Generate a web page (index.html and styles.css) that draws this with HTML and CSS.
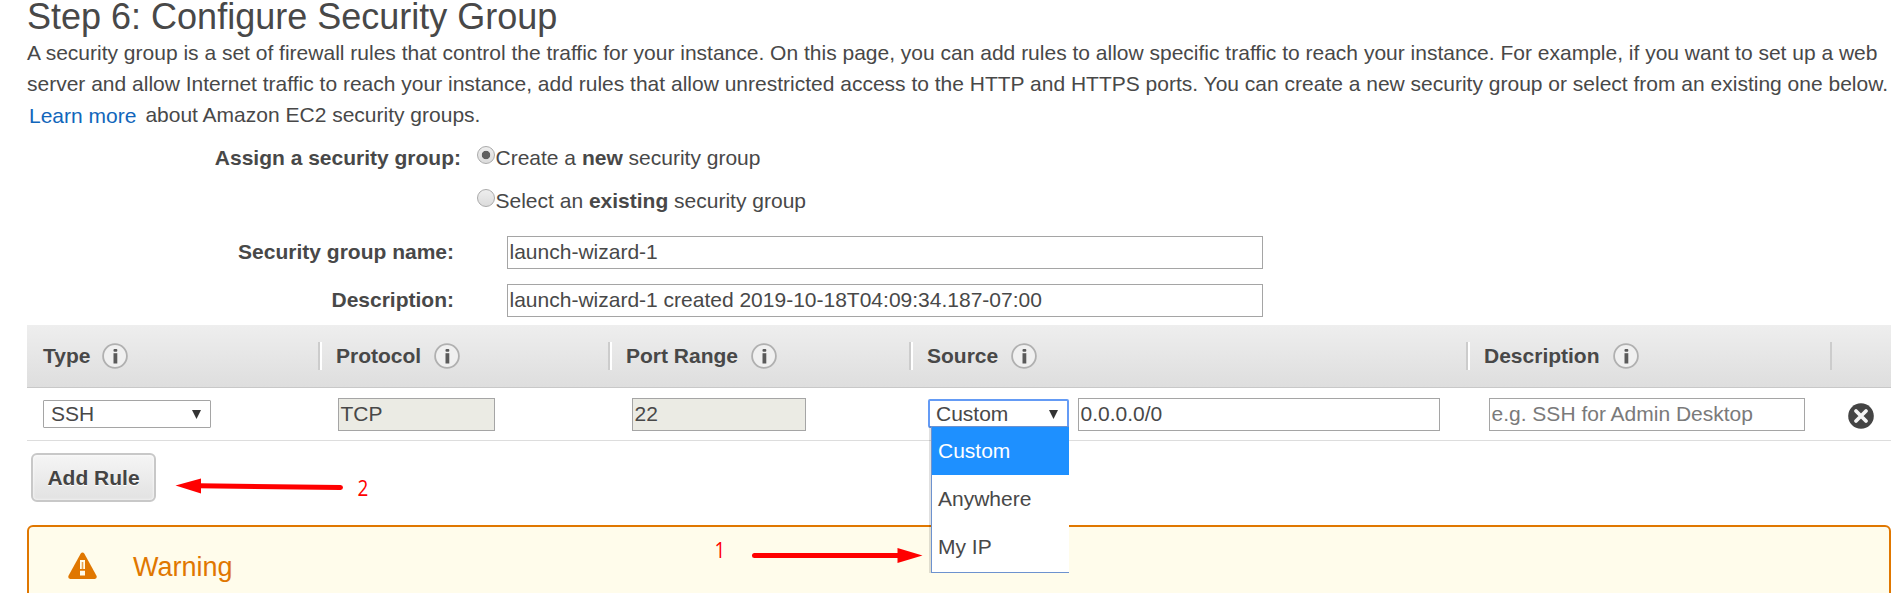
FILE: index.html
```html
<!DOCTYPE html>
<html lang="en">
<head>
<meta charset="utf-8">
<title>Configure Security Group</title>
<link rel="stylesheet" href="styles.css">
</head>
<body>
<svg class="defs" width="0" height="0">
  <defs>
    <symbol id="info" viewBox="0 0 26 26">
      <circle cx="13" cy="13" r="11.9" fill="#f0f0f0" stroke="#b0b0b0" stroke-width="1.8"/>
      <rect x="11.5" y="6" width="3.800" height="2.700" rx="1" fill="#5a5a5a"/>
      <path d="M11.5 10.200h3.800v10.300h-3.800z" fill="#5a5a5a"/>
    </symbol>
  </defs>
</svg>
<main class="page">
  <h1 class="title">Step 6: Configure Security Group</h1>
  <p class="intro"><span>A security group is a set of firewall rules that control the traffic for your instance. On this page, you can add rules to allow specific traffic to reach your instance. For example, if you want to set up a web</span><br><span>server and allow Internet traffic to reach your instance, add rules that allow unrestricted access to the HTTP and HTTPS ports. You can create a new security group or select from an existing one below.</span><br><a class="learn">Learn more</a><span>about Amazon EC2 security groups.</span></p>

  <div class="assign">
    <div class="assign-label">Assign a security group:</div>
    <div class="radios">
      <label class="radio"><span class="dot on"></span><span>Create a <b>new</b> security group</span></label>
      <label class="radio"><span class="dot"></span><span>Select an <b>existing</b> security group</span></label>
    </div>
  </div>
  <div class="field"><div class="field-label">Security group name:</div><div class="input">launch-wizard-1</div></div>
  <div class="field"><div class="field-label">Description:</div><div class="input">launch-wizard-1 created 2019-10-18T04:09:34.187-07:00</div></div>

  <section class="rules">
    <div class="row head">
      <div class="th first"><span>Type</span><svg class="info"><use href="#info"/></svg></div>
      <div class="th"><span>Protocol</span><svg class="info"><use href="#info"/></svg></div>
      <div class="th"><span>Port Range</span><svg class="info"><use href="#info"/></svg></div>
      <div class="th"><span>Source</span><svg class="info"><use href="#info"/></svg></div>
      <div class="th"><span>Description</span><svg class="info"><use href="#info"/></svg></div>
      <div class="th last"></div>
    </div>
    <div class="row body">
      <div class="td type"><div class="select">SSH<i class="caret"></i></div></div>
      <div class="td proto"><div class="input off">TCP</div></div>
      <div class="td port"><div class="input off">22</div></div>
      <div class="td source">
        <div class="select focus">Custom<i class="caret"></i>
          <ul class="menu"><li class="active">Custom</li><li>Anywhere</li><li>My IP</li></ul>
        </div>
        <div class="input">0.0.0.0/0</div>
      </div>
      <div class="td desc"><div class="input hint">e.g. SSH for Admin Desktop</div></div>
      <div class="td remove">
        <svg class="close" viewBox="0 0 26 26"><circle cx="13" cy="13" r="12.8" fill="#444"/><path d="M8 8l10 10M18 8L8 18" stroke="#f4f4f4" stroke-width="3.8" stroke-linecap="round"/></svg>
      </div>
    </div>
  </section>

  <button class="add">Add Rule</button>

  <section class="warning">
    <svg class="alert" viewBox="0 0 29 27"><path d="M14.5 0.5Q15.6 .5 16.4 1.8L28.5 23.8Q29.4 26.7 26.8 27H2.2Q-.4 26.7 .5 23.8L12.6 1.8Q13.4 .5 14.5 .5z" fill="#e07700"/><path d="M12 8h5v9h-5zM12 18.700h5V23.500h-5z" fill="#fffceb"/><path d="M13.700 10h1.600v7h-1.600z" fill="#e9a24c"/></svg>
    <h2 class="warning-title">Warning</h2>
  </section>
</main>

<!-- Numbered callouts drawn over the page -->
<svg class="marks" viewBox="0 0 1898 593">
  <g stroke="#f00" stroke-width="5" stroke-linecap="round"><path d="M198 485.700L340.500 487.500"/><path d="M754.500 555.500H900"/></g>
  <path d="M175.500 485.500L201 478.500V493.500zM922.500 555.500L897.500 548V563z" fill="#f00"/>
</svg>
<span class="num two">2</span>
<span class="num one">1</span>
</body>
</html>
```
FILE: styles.css
```css
* { box-sizing: border-box; }
body {
  margin: 0;
  width: 1898px;
  height: 593px;
  overflow: hidden;
  position: relative;
  background: #fff;
  color: #484848;
  font: 21px/31px "Liberation Sans", Arial, sans-serif;
  white-space: nowrap;
}
.defs { position: absolute; }
.page { padding: 0 7px 0 27px; }
.title { margin: 0; height: 37px; font-size: 36px; line-height: 33px; font-weight: 400; }
.intro { margin: 0; height: 105px; }
.learn { display: inline-block; height: 31px; padding-top: 1px; vertical-align: top; color: #1166bb; margin: 0 9px 0 2px; }

.assign { display: flex; height: 94px; line-height: 32px; }
.assign-label { width: 434px; text-align: right; font-weight: 700; }
.radios { padding-left: 16px; }
.radio { display: flex; height: 43px; gap: 0.5px; }
.dot {
  width: 18px; height: 18px; margin-top: 4px;
  border: 1px solid #aaa; border-radius: 50%;
  background: linear-gradient(#eee, #dcdcdc);
}
.dot.on { background: radial-gradient(circle, #606060 0 3.8px, transparent 4.6px), linear-gradient(#eee, #dcdcdc); }

.field { display: flex; height: 33px; margin-bottom: 15px; line-height: 32px; }
.field + .field { margin-bottom: 8px; }
.field-label { width: 427px; margin-right: 53px; text-align: right; font-weight: 700; }
.field .input { width: 756px; }
.input { height: 33px; border: 1px solid #a5a5a5; padding-left: 1.5px; line-height: 30px; background: #fff; }
.input.off { background: #ebebe4; }
.input.hint { color: #7a7a7a; }

.row { display: grid; grid-template-columns: 291px 290px 301px 557px 364px 61px; }
.head { height: 63px; background: linear-gradient(#eee, #dedede); border-bottom: 1px solid #c8c8c8; align-items: center; }
.th {
  display: flex; align-items: center; height: 28px;
  padding-left: 16px; font-weight: 700;
  border-left: 2px solid #ccc; box-shadow: inset 2px 0 #fff;
}
.th span { padding-bottom: 2px; }
.th.first { border: 0; box-shadow: none; }
.th.last { box-shadow: none; }
.info { width: 26px; height: 26px; margin-left: 13px; }
.th.first .info { margin-left: 12px; }
.body { height: 53px; border-bottom: 1px solid #ddd; }
.td { display: flex; padding-top: 10px; }
.type { padding-left: 16px; }
.proto { padding-left: 20px; }
.proto .input { width: 157px; }
.port { padding-left: 24px; }
.port .input { width: 174px; }
.source { padding-left: 19px; gap: 9px; }
.source > .input { width: 362px; }
.desc { padding-left: 23px; }
.desc .input { width: 316px; }
.remove { padding: 15px 0 0 18px; }
.close { width: 26px; height: 26px; }

.select {
  position: relative; display: flex; justify-content: space-between;
  width: 168px; height: 28px; margin-top: 2px; padding: 0 9px 0 7px;
  border: 1px solid #a5a5a5; border-radius: 1px; line-height: 26px;
}
.select.focus { width: 141px; height: 29px; margin-top: 1px; padding: 0 9px 0 6px; border: 2px solid #649bf5; border-radius: 2px; }
.caret { width: 9px; height: 9px; margin-top: 9px; background: #333; clip-path: polygon(0 0, 100% 0, 50% 100%); }
.menu {
  position: absolute; z-index: 2; left: 1px; top: 25px; width: 138px; height: 147px;
  margin: 0; padding: 0; list-style: none; background: #fff;
  border: 1px solid #6d92cf; border-right: 0; box-shadow: -2px 0 0 rgba(0, 0, 0, .12);
}
.menu li { height: 48px; padding-left: 6px; line-height: 47px; }
.menu .active { background: #1e90ff; color: #fff; }

.add {
  display: block; width: 125px; height: 49px; margin: 12px 0 23px 4px; padding: 1px 0 0;
  border: 2px solid #c8c8c8; border-radius: 6px;
  background: linear-gradient(#f5f5f5, #e2e2e2); box-shadow: inset 0 0 3px #fff;
  color: #444; font: 700 21px/44px "Liberation Sans", Arial, sans-serif; text-shadow: 0 1px #fff;
}
.warning {
  display: flex; height: 90px; padding: 25px 0 0 39px;
  border: 2px solid #e07700; border-radius: 6px; background: #fffceb; color: #e07700;
}
.alert { width: 29px; height: 27px; }
.warning-title { margin: -1px 0 0 36px; font-size: 27px; line-height: 32px; font-weight: 400; }

.marks { position: absolute; z-index: 3; left: 0; top: 0; width: 1898px; height: 593px; fill: none; }
.num { position: absolute; z-index: 3; color: #f00; font: 21px/24px "Open Sans", sans-serif; transform: scaleX(.9); }
.two { left: 357px; top: 476px; }
.one { left: 714px; top: 538px; }
```
